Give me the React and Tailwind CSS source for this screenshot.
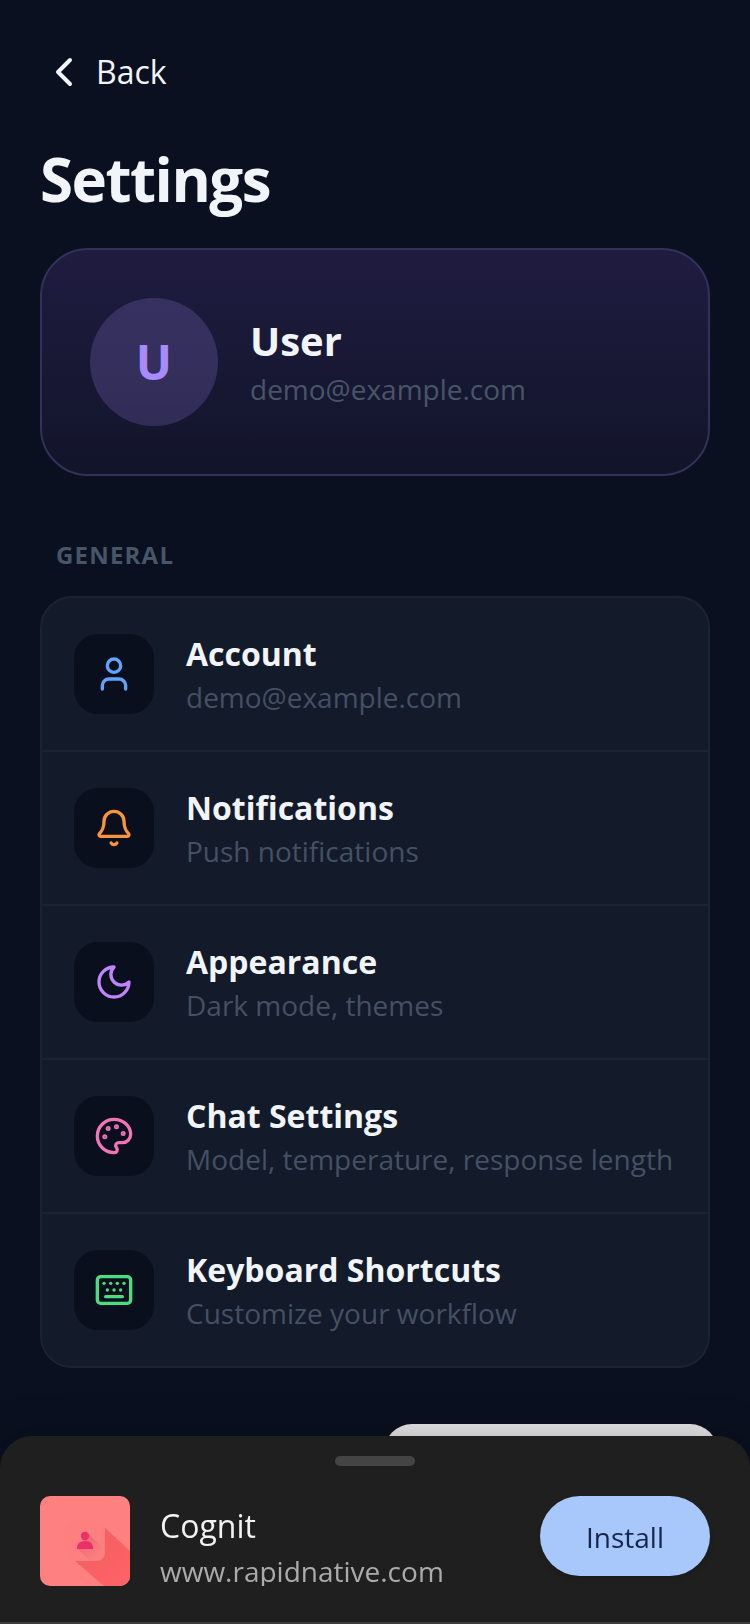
import { Bell, ChevronLeft, Keyboard, Palette, User } from 'lucide-react';

// Crescent with pointed tips
const MoonIcon = ({ size, className }) => (
  <svg
    width={size}
    height={size}
    viewBox="0 0 24 24"
    fill="none"
    stroke="currentColor"
    strokeWidth="2"
    strokeLinecap="round"
    strokeLinejoin="round"
    className={className}
    aria-hidden="true"
  >
    <path d="M12 3a6 6 0 0 0 9 9 9 9 0 1 1-9-9Z" />
  </svg>
);

const items = [
  { title: 'Account', subtitle: 'demo@example.com', Icon: User, color: 'text-[#60a5fa]' },
  { title: 'Notifications', subtitle: 'Push notifications', Icon: Bell, color: 'text-[#fb923c]' },
  { title: 'Appearance', subtitle: 'Dark mode, themes', Icon: MoonIcon, color: 'text-[#c084fc]' },
  { title: 'Chat Settings', subtitle: 'Model, temperature, response length', Icon: Palette, color: 'text-[#f472b6]' },
  { title: 'Keyboard Shortcuts', subtitle: 'Customize your workflow', Icon: Keyboard, color: 'text-[#4ade80]' },
];

const SettingsRow = ({ title, subtitle, Icon, color }) => (
  <li className="border-b-2 border-[#1b2332] last:border-b-0">
    <button type="button" className="flex w-full items-center gap-8 p-8 text-left">
      <span className="flex size-20 shrink-0 items-center justify-center rounded-3xl bg-[#0a0f1e]">
        <Icon size={40} className={color} />
      </span>
      <span className="flex min-w-0 flex-col pb-0.5">
        <span className="text-[32px] leading-12 font-bold text-[#f1f5f9]">{title}</span>
        <span className="truncate text-[28px] leading-[38px] text-[#445063]">{subtitle}</span>
      </span>
    </button>
  </li>
);

// App icon with a long diagonal shadow
const AppLogo = () => (
  <svg viewBox="0 0 90 90" className="size-[90px] shrink-0 rounded-[10px]" aria-hidden="true">
    <defs>
      <linearGradient id="logoShadow" x1="45" y1="45" x2="85" y2="85" gradientUnits="userSpaceOnUse">
        <stop offset="0" stopColor="#f26063" />
        <stop offset="1" stopColor="#ff6266" />
      </linearGradient>
      <linearGradient id="personShadow" x1="48" y1="45" x2="60" y2="58" gradientUnits="userSpaceOnUse">
        <stop offset="0" stopColor="#ee6e77" />
        <stop offset="1" stopColor="#fd7f80" />
      </linearGradient>
    </defs>
    <rect width="90" height="90" fill="#ff8080" />
    <path d="M64 31 90 55V90H64L35 65Z" fill="url(#logoShadow)" />
    <rect x="25" y="25" width="40" height="40" rx="8" fill="#fd7f80" />
    <path d="M48 37 64 53V57a8 8 0 0 1-8 8H50L38 53Z" fill="url(#personShadow)" />
    <circle cx="45" cy="40" r="4.2" fill="#eb2f67" />
    <path d="M37 53v-1q0-7 8-7t8 7v1Z" fill="#eb2f67" />
  </svg>
);

const InstallSheet = () => (
  <div className="fixed inset-x-0 bottom-0 rounded-t-[32px] border-b-2 border-[#3c3c3c] bg-[#1f1f1f] shadow-[0_0_40px_rgba(0,0,0,0.25)]">
    <div className="flex justify-center pt-5">
      <div className="h-[10px] w-20 rounded-full bg-[#444444]" />
    </div>
    <div className="flex items-start px-10 pt-[30px] pb-9">
      <AppLogo />
      <div className="ml-[30px] flex h-[90px] min-w-0 flex-1 flex-col gap-1 overflow-hidden pt-2">
        <span className="shrink-0 text-[32px] leading-11 text-[#f2f2f2]">Cognit</span>
        <span className="shrink-0 truncate text-[28px] leading-[38px] text-[#ababab]">www.rapidnative.com</span>
      </div>
      <button type="button" className="h-20 rounded-full bg-[#a8c7fa] px-[46px] pt-0.5 text-[28px] text-[#14274a] shadow-md">
        Install
      </button>
    </div>
  </div>
);

const App = () => {
  return (
    <div className="min-h-screen bg-[#0a101f] font-['Open_Sans',sans-serif]">
      <main className="px-10 pt-12">
        <button type="button" className="flex items-center gap-2 text-[32px] leading-12 text-[#f1f5f9]">
          <ChevronLeft size={48} />
          Back
        </button>

        <h1 className="mt-11 text-[60px] leading-[78px] font-bold tracking-tight text-[#f1f5f9]">Settings</h1>

        {/* Profile */}
        <section className="mt-[30px] flex items-center gap-8 rounded-[48px] border-2 border-[#33305a] bg-linear-to-b from-[#1f1c40] to-[#12142a] p-12">
          <div className="flex size-32 shrink-0 items-center justify-center rounded-full bg-[#a78bfa]/20 text-[48px] font-bold text-[#a78bfa]">
            U
          </div>
          <div className="min-w-0">
            <h2 className="text-[40px] leading-[54px] font-bold text-[#f1f5f9]">User</h2>
            <p className="truncate text-[28px] leading-[42px] text-[#475569]">demo@example.com</p>
          </div>
        </section>

        {/* General */}
        <h3 className="mt-16 px-4 text-[24px] leading-[30px] font-bold tracking-wider text-[#475569]">GENERAL</h3>
        <ul className="mt-[26px] overflow-hidden rounded-[32px] border-2 border-[#1b2332] bg-[#131a29]">
          {items.map((item) => (
            <SettingsRow key={item.title} {...item} />
          ))}
        </ul>
      </main>

      <div className="fixed right-8 bottom-[140px] h-15 w-[334px] rounded-[28px] bg-[#e8e8ea]" />
      <InstallSheet />
    </div>
  );
};

export default App;
